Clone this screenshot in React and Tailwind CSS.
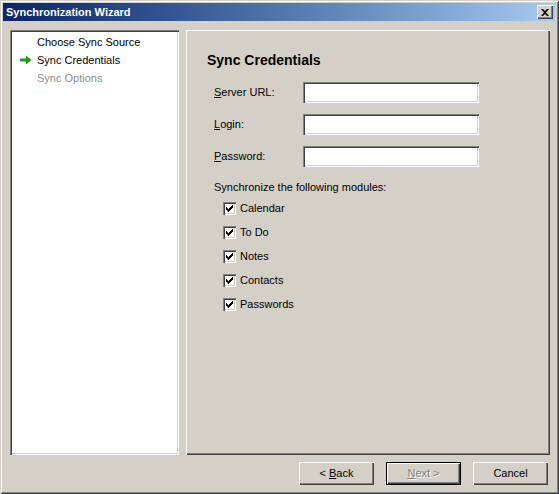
import React from 'react';

const FONT = { fontFamily: '"Liberation Sans", Arial, sans-serif' };

// classic raised / sunken edges
const raised = 'shadow-[inset_1px_1px_0_#ffffff,inset_-1px_-1px_0_#404040,inset_-2px_-2px_0_#808080]';
const sunken = 'shadow-[inset_1px_1px_0_#808080,inset_2px_2px_0_#404040,inset_-1px_-1px_0_#ffffff,inset_-2px_-2px_0_#d4d0c8]';

function classNames(...classes) {
  return classes.filter(Boolean).join(' ');
}

function Check() {
  return (
    <div className={`w-[13px] h-[13px] bg-white flex items-center justify-center ${sunken}`}>
      <svg width="7" height="7" viewBox="0 0 7 7">
        <path d="M0 2h1v1h1v1h1V3h1V2h1V1h1V0h1v3h-1v1h-1v1h-1v1h-1v1H2V6H1V5H0z" fill="#000" />
      </svg>
    </div>
  );
}

function Arrow() {
  return (
    <svg width="12" height="10" viewBox="0 0 12 10">
      <path d="M0 3.5h6V0.5L11.5 5 6 9.5V6.5H0z" fill="#1f9a1f" />
    </svg>
  );
}

function Field({ label, u }) {
  return (
    <div className="flex items-center h-[21px]">
      <span className="w-[89px] text-[11px] text-black">
        <span className="underline">{u}</span>{label.slice(1)}
      </span>
      <div className={`w-[176px] h-[21px] bg-white ${sunken}`} />
    </div>
  );
}

function Button({ children, disabled, isDefault }) {
  return (
    <button
      type="button"
      className={classNames(
        'w-[75px] h-[23px] bg-[#d4d0c8] text-[11px] flex items-center justify-center',
        isDefault ? 'border border-black shadow-[inset_1px_1px_0_#ffffff,inset_-1px_-1px_0_#404040,inset_-2px_-2px_0_#808080]' : raised,
        disabled ? 'text-[#808080] [text-shadow:1px_1px_0_#ffffff]' : 'text-black'
      )}
    >
      {children}
    </button>
  );
}

export default function App() {
  const modules = ['Calendar', 'To Do', 'Notes', 'Contacts', 'Passwords'];

  return (
    <div
      className="w-[559px] h-[494px] bg-[#d4d0c8] p-[3px] flex flex-col shadow-[inset_1px_1px_0_#d4d0c8,inset_-1px_-1px_0_#404040,inset_2px_2px_0_#ffffff,inset_-2px_-2px_0_#808080]"
      style={FONT}
    >
      {/* title bar */}
      <div className="h-[18px] mr-[1px] flex items-center justify-between bg-gradient-to-r from-[#0a246a] to-[#a6caf0]">
        <span className="pl-[3px] text-[11px] font-bold text-white leading-none">Synchronization Wizard</span>
        <div className={`w-[16px] h-[14px] mr-[2px] bg-[#d4d0c8] flex items-center justify-center ${raised}`}>
          <svg width="8" height="7" viewBox="0 0 8 7">
            <path d="M0 0h2l2 2 2-2h2L5 3.5 8 7H6L4 5 2 7H0l3-3.5z" fill="#000" />
          </svg>
        </div>
      </div>

      {/* panels */}
      <div className="flex mt-[9px] ml-[7px] mr-[6px] gap-[7px] h-[425px]">
        <div className={`w-[169px] bg-white pt-[3px] ${sunken}`}>
          {[
            { t: 'Choose Sync Source', c: 'text-black' },
            { t: 'Sync Credentials', c: 'text-black', active: true },
            { t: 'Sync Options', c: 'text-[#8f8f8f]' },
          ].map((s) => (
            <div key={s.t} className="flex items-center h-[18px]">
              <div className="w-[27px] pl-[10px] flex items-center">{s.active && <Arrow />}</div>
              <span className={`text-[11px] ${s.c}`}>{s.t}</span>
            </div>
          ))}
        </div>

        <div className={`flex-1 pt-[22px] pl-[21px] ${raised}`}>
          <h1 className="text-[14px] font-bold text-black leading-[17px]">Sync Credentials</h1>
          <div className="ml-[7px] mt-[13px] flex flex-col gap-[11px]">
            <Field label="Server URL:" u="S" />
            <Field label="Login:" u="L" />
            <Field label="Password:" u="P" />
          </div>
          <div className="ml-[7px] mt-[14px] text-[11px] text-black leading-[13px]">
            Synchronize the following modules:
          </div>
          <div className="ml-[16px] mt-[8px] flex flex-col gap-[11px]">
            {modules.map((m) => (
              <div key={m} className="flex items-center gap-[4px] h-[13px]">
                <Check />
                <span className="text-[11px] text-black">{m}</span>
              </div>
            ))}
          </div>
        </div>
      </div>

      {/* buttons */}
      <div className="flex justify-end gap-[12px] mt-[7px] mr-[8px]">
        <Button>&lt; <span className="underline ml-[3px]">B</span>ack</Button>
        <Button disabled isDefault><span className="underline">N</span>ext &gt;</Button>
        <Button>Cancel</Button>
      </div>
    </div>
  );
}
